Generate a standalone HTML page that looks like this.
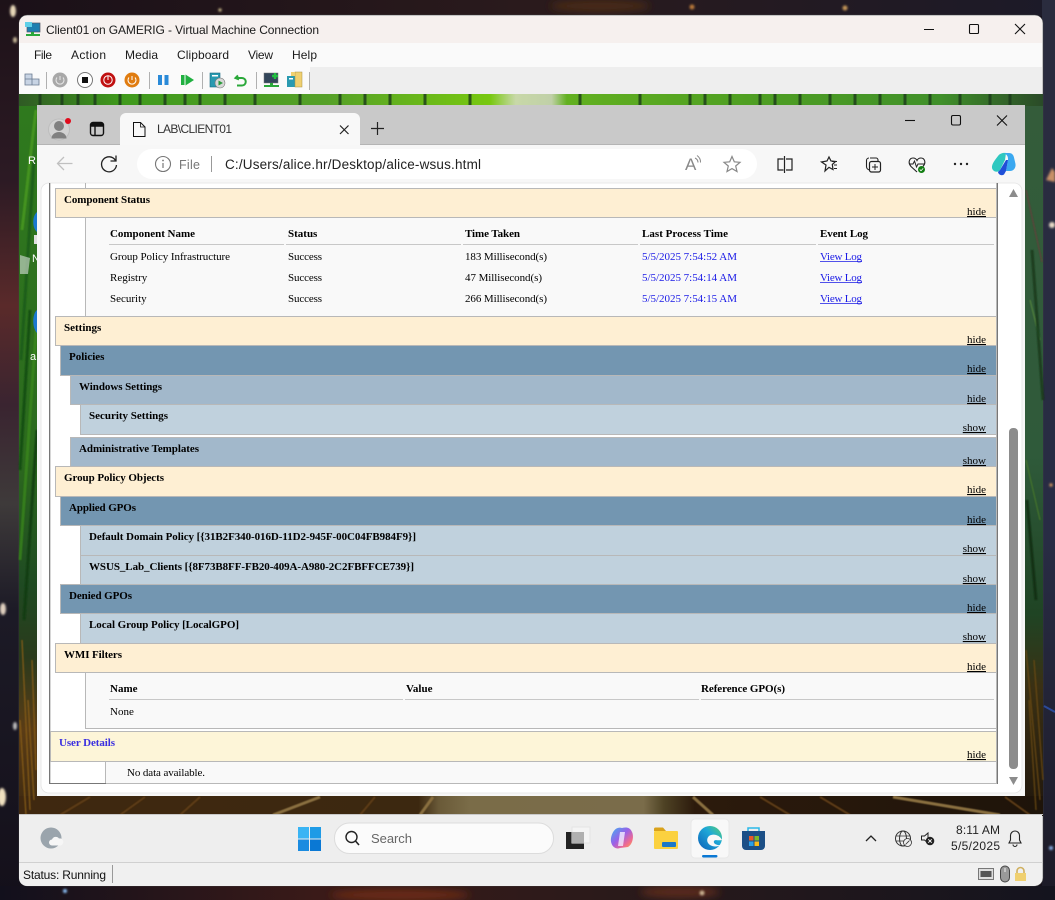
<!DOCTYPE html>
<html><head><meta charset="utf-8"><title>Client01</title>
<style>
html,body{margin:0;padding:0;width:1055px;height:900px;overflow:hidden;background:#15101a}
svg{display:block}
.u{font-family:"Liberation Sans",sans-serif;font-size:12px;fill:#1a1a1a}
.s{font-family:"Liberation Serif",serif;font-size:11px;fill:#000}
.b{font-family:"Liberation Serif",serif;font-size:11px;font-weight:bold;fill:#000}
.l{text-decoration:underline}
.a{fill:#1a1ae6}
</style></head><body>
<svg width="1055" height="900" viewBox="0 0 1055 900" xmlns="http://www.w3.org/2000/svg">
<defs>
<linearGradient id="gl" x1="0" y1="0" x2="0" y2="1"><stop offset="0" stop-color="#1d1218"/><stop offset=".2" stop-color="#2c1a24"/><stop offset=".34" stop-color="#5a2a2a"/><stop offset=".45" stop-color="#3a2430"/><stop offset=".56" stop-color="#3e3a3a"/><stop offset=".68" stop-color="#1c1a26"/><stop offset="1" stop-color="#14101a"/></linearGradient>
<linearGradient id="gr" x1="0" y1="0" x2="0" y2="1"><stop offset="0" stop-color="#2a2c3e"/><stop offset=".6" stop-color="#282c44"/><stop offset="1" stop-color="#1c1a26"/></linearGradient>
<linearGradient id="gt" x1="0" y1="0" x2="1" y2="0"><stop offset="0" stop-color="#1a1018"/><stop offset=".5" stop-color="#2a1a1c"/><stop offset="1" stop-color="#1c1a28"/></linearGradient>
<linearGradient id="gb" x1="0" y1="0" x2="1" y2="0"><stop offset="0" stop-color="#12101c"/><stop offset=".3" stop-color="#3a1a18"/><stop offset=".55" stop-color="#2c1a1a"/><stop offset="1" stop-color="#14141e"/></linearGradient>
<linearGradient id="dl" x1="0" y1="0" x2="0" y2="1"><stop offset="0" stop-color="#2f7a1e"/><stop offset=".5" stop-color="#2c6a1e"/><stop offset=".68" stop-color="#1f4a22"/><stop offset=".78" stop-color="#2a3a1c"/><stop offset=".88" stop-color="#5a3c16"/><stop offset="1" stop-color="#3c2810"/></linearGradient>
<linearGradient id="dr" x1="0" y1="0" x2="0" y2="1"><stop offset="0" stop-color="#345c3a"/><stop offset=".5" stop-color="#2f5a3a"/><stop offset=".72" stop-color="#1f4424"/><stop offset=".82" stop-color="#3a3014"/><stop offset="1" stop-color="#20160c"/></linearGradient>
<linearGradient id="dt" x1="0" y1="0" x2="1" y2="0"><stop offset="0" stop-color="#2f5a24"/><stop offset=".1" stop-color="#3f9a1c"/><stop offset=".3" stop-color="#55a028"/><stop offset=".46" stop-color="#78c810"/><stop offset=".485" stop-color="#c8d8a8"/><stop offset=".52" stop-color="#c0d0a8"/><stop offset=".535" stop-color="#62b020"/><stop offset=".7" stop-color="#50a022"/><stop offset=".9" stop-color="#40902a"/><stop offset="1" stop-color="#2a4a28"/></linearGradient>
<linearGradient id="db" x1="0" y1="0" x2="1" y2="0"><stop offset="0" stop-color="#3f2810"/><stop offset=".39" stop-color="#3c2810"/><stop offset=".41" stop-color="#6a5a38"/><stop offset=".44" stop-color="#7a6c48"/><stop offset=".61" stop-color="#7a6c4a"/><stop offset=".63" stop-color="#4e4224"/><stop offset=".66" stop-color="#2c1a0c"/><stop offset="1" stop-color="#1e140a"/></linearGradient>
<linearGradient id="edge" x1="1" y1="0" x2="0" y2="1"><stop offset="0" stop-color="#58d070"/><stop offset=".4" stop-color="#1ea8d8"/><stop offset="1" stop-color="#0b5fb8"/></linearGradient>
<linearGradient id="cop2" x1="0" y1="0" x2="1" y2="1"><stop offset="0" stop-color="#3fb0f0"/><stop offset=".45" stop-color="#9a60e8"/><stop offset=".75" stop-color="#f06a90"/><stop offset="1" stop-color="#f8b040"/></linearGradient>
<filter id="bl"><feGaussianBlur stdDeviation="1"/></filter>
<filter id="bl4"><feGaussianBlur stdDeviation="4"/></filter>
<filter id="bl2"><feGaussianBlur stdDeviation=".6"/></filter>
</defs>

<!-- space wallpaper -->
<rect x="0" y="0" width="1055" height="16" fill="url(#gt)"/>
<rect x="0" y="0" width="20" height="900" fill="url(#gl)"/>
<rect x="1042" y="0" width="13" height="900" fill="url(#gr)"/>
<rect x="0" y="886" width="1055" height="14" fill="url(#gb)"/>
<g filter="url(#bl4)">
<ellipse cx="400" cy="895" rx="70" ry="6" fill="#6a2a18"/><ellipse cx="680" cy="892" rx="40" ry="6" fill="#5a2a1c"/>
<ellipse cx="600" cy="6" rx="50" ry="6" fill="#4a2a18"/>
</g>
<g filter="url(#bl)">
<ellipse cx="13" cy="11" rx="3" ry="6" fill="#e8d8b8"/><ellipse cx="15" cy="40" rx="2" ry="3" fill="#c8b898"/>
<ellipse cx="2" cy="797" rx="4" ry="9" fill="#f0e0c0"/>
<ellipse cx="3" cy="609" rx="3" ry="6" fill="#e0d0c0"/><ellipse cx="15" cy="726" rx="2" ry="4" fill="#c0c0c0"/>
<path d="M1046 180L1052 168L1055 172V182Z" fill="#c89068"/><circle cx="1052" cy="225" r="3" fill="#e8dcc8"/><circle cx="1051" cy="485" r="1.600" fill="#e0a060"/>
<circle cx="702" cy="893" r="2.500" fill="#c8b090"/><circle cx="65" cy="891" r="2" fill="#8cc0f8"/><circle cx="1051" cy="848" r="2" fill="#8cb0e8"/>
<circle cx="220" cy="10" r="1.600" fill="#d0c090"/><circle cx="692" cy="7" r="2.500" fill="#b8783a"/><circle cx="845" cy="8" r="2.500" fill="#c89858"/>
</g>
<path d="M1044 706L1055 712" stroke="#2a4a9a" stroke-width="2"/>

<!-- VM window -->
<path d="M27 15H1035a8 8 0 0 1 8 8V878a8 8 0 0 1-8 8H27a8 8 0 0 1-8-8V23a8 8 0 0 1 8-8Z" fill="#eee" stroke="#444" stroke-width=".5"/>
<path d="M27 16H1035a7 7 0 0 1 7 7V43H19V23a8 8 0 0 1 8-7Z" fill="#f6f0ee"/>
<rect x="19" y="43" width="1023" height="24" fill="#fafafa"/>
<rect x="19" y="67" width="1023" height="27" fill="#eeeeee"/>
<rect x="19" y="67" width="291" height="27" fill="#fafafa"/>

<!-- VM desktop wallpaper -->
<rect x="19" y="94" width="18" height="722" fill="url(#dl)"/>
<rect x="1025" y="94" width="18" height="722" fill="url(#dr)"/>
<rect x="19" y="94" width="1024" height="12" fill="url(#dt)"/>
<rect x="19" y="796" width="1024" height="20" fill="url(#db)"/>
<g fill="none" filter="url(#bl2)">
<g stroke-width="3">
<path d="M22 230C28 180 32 140 36 110" stroke="#4a9a20" opacity=".8"/><path d="M21 360L34 160" stroke="#1d5a18" opacity=".8"/><path d="M20 470L30 310" stroke="#144a14" opacity=".8"/><path d="M20 560L36 330" stroke="#3a8a18" opacity=".7"/><path d="M24 620L37 430" stroke="#123c14" opacity=".8"/>
<path d="M1026 190L1042 262" stroke="#6a3a3a" stroke-width="1.500" opacity=".7"/><path d="M1030 300L1040 340" stroke="#5a8a3a" stroke-width="1.500" opacity=".7"/><path d="M1026 460L1040 520" stroke="#4a7a2a" stroke-width="1.500" opacity=".7"/><path d="M1032 250L1043 400" stroke="#153a1c" opacity=".8"/><path d="M1027 500L1036 600" stroke="#0f2c14" opacity=".8"/>
</g>
<path d="M1026 650L1040 800M1034 660L1043 780M1029 700L1036 810" stroke="#6a4a14" stroke-width="1.500" opacity=".8"/><path d="M22 640L30 810M28 700L34 800M20 720L26 815M32 660L36 770" stroke="#8a5e1c" stroke-width="1.500" opacity=".8"/>
<path d="M273 815L320 797M420 815L433 797M693 797L713 815M893 797L1000 815" stroke="#8a7040" stroke-width="3"/>
<path d="M60 815L90 797M120 815L145 797M180 815L200 797M360 815L375 797M760 797L790 815M820 797L850 815M1005 797L1030 815" stroke="#5e3c16" stroke-width="2"/>
</g>
<g stroke="#1c3a1c" stroke-width="3" opacity=".8"><path d="M40 94V106M62 94V106M78 94V106M95 94V106M120 94V106M140 94V106M165 94V106M185 94V106M200 94V106M225 94V106M255 94V106M300 94V106M340 94V106M365 94V106M390 94V106M425 94V106M470 94V106M580 94V106M640 94V106M690 94V106M705 94V106M730 94V106M760 94V106M775 94V106M800 94V106M830 94V106M855 94V106M880 94V106M905 94V106M930 94V106M960 94V106M990 94V106M1010 94V106"/></g>
<path d="M37 212C32 216 32 228 37 232Z" fill="#1a78d0"/><path d="M37 310C32 314 32 328 37 333Z" fill="#1a78d0"/>
<rect x="34" y="235" width="3" height="9" fill="#e0e0e0"/>
<path d="M20 255L30 258L28 274L20 274Z" fill="#c0d0c0" opacity=".7"/>
<text x="28" y="164" class="u" style="fill:#fff;font-size:11px">R</text>
<text x="32" y="262" class="u" style="fill:#fff;font-size:11px">N</text>
<text x="30" y="360" class="u" style="fill:#fff;font-size:11px">a</text>

<!-- title icon -->
<rect x="27" y="23" width="13" height="9" fill="#1e7fb0" stroke="#556" stroke-width=".7"/><rect x="25" y="22" width="7" height="5" fill="#5fd0e8"/><rect x="31" y="32" width="3" height="2" fill="#2aa83a"/><rect x="26" y="34" width="14" height="2" fill="#2aa83a"/>
<text x="46" y="34" class="u" textLength="273" lengthAdjust="spacing">Client01 on GAMERIG - Virtual Machine Connection</text>
<path d="M924 29.500H934" stroke="#111" stroke-width="1"/>
<rect x="969.500" y="24.500" width="9" height="9" rx="1" fill="none" stroke="#111" stroke-width="1.100"/>
<path d="M1015 24L1025 34M1025 24L1015 34" stroke="#111" stroke-width="1.100"/>

<!-- menu -->
<text x="34" y="59" class="u" textLength="18">File</text>
<text x="71" y="59" class="u" textLength="35">Action</text>
<text x="125" y="59" class="u" textLength="33">Media</text>
<text x="177" y="59" class="u" textLength="52">Clipboard</text>
<text x="248" y="59" class="u" textLength="25">View</text>
<text x="292" y="59" class="u" textLength="25">Help</text>

<!-- VM toolbar icons -->
<g>
<path d="M25 79h7v-5h-7ZM25 85h7v-6h-7ZM32 85h7v-6h-7Z" fill="#c8d4e4" stroke="#6a7a90" stroke-width=".8"/>
<path d="M46.500 72V89M149.500 72V89M202.500 72V89M256.500 72V89M309.500 72V90" stroke="#b0b0b0"/>
<circle cx="60" cy="80" r="7.500" fill="#a8a8a8"/><path d="M60 76V80M57 77.500a4 4 0 1 0 6 0" stroke="#e8e8e8" fill="none"/>
<circle cx="85" cy="80" r="7.500" fill="#fff" stroke="#777"/><rect x="82" y="77" width="6" height="6" fill="#111"/>
<circle cx="108" cy="80" r="7.500" fill="#c01010"/><circle cx="108" cy="80" r="4.200" fill="none" stroke="#fff"/><path d="M108 75.500V80" stroke="#fff"/>
<circle cx="132" cy="80" r="7.500" fill="#e07c10"/><path d="M132 76V80M129 77.500a4 4 0 1 0 6 0" stroke="#fff" fill="none"/>
<rect x="158" y="75" width="4" height="10" fill="#2a8ad8"/><rect x="164.500" y="75" width="4" height="10" fill="#2a8ad8"/>
<rect x="181" y="75" width="3.500" height="10" fill="#20b040"/><path d="M185.500 74.500L194 80L185.500 85.500Z" fill="#20b040"/>
<rect x="210" y="73" width="10" height="14" fill="#2a9ab0" stroke="#1a6a80" stroke-width=".6"/><rect x="212" y="75" width="6" height="1.500" fill="#fff"/><circle cx="220" cy="83" r="5" fill="#d8d8d8" stroke="#777" stroke-width=".6"/><path d="M218.500 80.500L223 83L218.500 85.500Z" fill="#2a9a3a"/>
<path d="M238 75.500L235.500 78L239 79.500M236 78H242a3.500 3.500 0 0 1 0 7.500H237" stroke="#2aa83a" stroke-width="2" fill="none"/>
<rect x="264" y="73" width="14" height="10" fill="#33465a" stroke="#777" stroke-width=".5"/><path d="M275 73V79M272 76H278" stroke="#22c040" stroke-width="2.400"/><rect x="270" y="83" width="3" height="2" fill="#2aa83a"/><rect x="264" y="85" width="15" height="2" fill="#2aa83a"/>
<rect x="287" y="76" width="8" height="11" fill="#2a9ab0"/><rect x="289" y="78" width="4" height="1.500" fill="#fff"/><rect x="295" y="72" width="7" height="15" fill="#f0d070" stroke="#a89040" stroke-width=".5"/><rect x="291" y="72" width="4" height="4" fill="#f0d070"/>
</g>

<!-- Browser window -->
<rect x="37" y="105" width="988" height="691" fill="#f7f7f7"/>
<rect x="37" y="105" width="988" height="39" fill="#c9c9c9"/>
<rect x="37" y="144" width="988" height="1" fill="#b4b4b4"/>
<circle cx="59" cy="129.500" r="10.500" fill="#d2d2d2" stroke="#bdbdbd"/>
<circle cx="59" cy="126" r="5" fill="#808080"/><path d="M51.500 138.500a7.500 6.500 0 0 1 15 0Z" fill="#808080"/>
<circle cx="68" cy="121" r="3" fill="#e00b1c"/>
<rect x="90.500" y="122.500" width="13" height="13" rx="2.500" fill="none" stroke="#111" stroke-width="1.400"/><path d="M90.500 126H103.500M95 126V135.500" stroke="#111" stroke-width="1.400"/><rect x="91" y="123" width="12" height="3" fill="#111"/>
<path d="M120 145V119a6 6 0 0 1 6-6H354a6 6 0 0 1 6 6V145Z" fill="#f8f8f8"/>
<path d="M133.500 122.500H140.500L145 127V136.500H133.500Z" fill="none" stroke="#111" stroke-width="1"/><path d="M140.500 122.500V127H145" fill="none" stroke="#111" stroke-width=".8"/>
<text x="157" y="133" class="u" textLength="75" style="fill:#333">LAB\CLIENT01</text>
<path d="M340 125.500L348.500 134M348.500 125.500L340 134" stroke="#222" stroke-width="1.200"/>
<path d="M377.500 122V135M371 128.500H384" stroke="#222" stroke-width="1.200"/>
<path d="M905 120.500H915" stroke="#111" stroke-width="1.100"/>
<rect x="951.500" y="115.500" width="9" height="9.500" rx="1.500" fill="none" stroke="#111" stroke-width="1.100"/>
<path d="M997 115.500L1007 125.500M1007 115.500L997 125.500" stroke="#111" stroke-width="1.100"/>

<!-- Browser toolbar -->
<path d="M72.500 163.500H58M64 157L57.500 163.500L64 170" fill="none" stroke="#c0c0c0" stroke-width="1.300"/>
<path d="M115.500 160.500A7.500 7.500 0 1 0 116.500 165M116 155.500V161H110.500" fill="none" stroke="#222" stroke-width="1.300"/>
<rect x="137" y="149" width="620" height="30" rx="15" fill="#fff"/>
<circle cx="163" cy="164" r="7.500" fill="none" stroke="#777" stroke-width="1.100"/><path d="M163 163V168" stroke="#777" stroke-width="1.200"/><circle cx="163" cy="160.500" r=".9" fill="#777"/>
<text x="179" y="169" class="u" textLength="21" style="fill:#777;font-size:12.500px">File</text>
<path d="M211.500 156V172" stroke="#999"/>
<text x="225" y="169" class="u" textLength="256" style="font-size:13.500px;fill:#222">C:/Users/alice.hr/Desktop/alice-wsus.html</text>
<text x="685" y="170" class="u" style="fill:#888;font-size:17px">A</text>
<path d="M695 158a5 5 0 0 1 3 4.500M697 155.500a8 8 0 0 1 3.500 7" fill="none" stroke="#888"/>
<path d="M732 156.500L734.300 161.800L740 162.300L735.700 166L737 171.500L732 168.600L727 171.500L728.300 166L724 162.300L729.700 161.800Z" fill="none" stroke="#888" stroke-width="1.200"/>
<path d="M783.500 159H778V170H783.500M786 159H792V170H786M784.500 156V173" fill="none" stroke="#222" stroke-width="1.200"/>
<path d="M829 157L831 161L835.500 161.500L832.300 164.500L833 169.500L829 167.300L825 171L826 165L821.500 162L827 161Z" fill="none" stroke="#222" stroke-width="1.200"/><path d="M832 161.500H837M834 165H837M834 168.500H837" stroke="#222"/>
<path d="M870 158H876a2 2 0 0 1 2 2V161" fill="none" stroke="#222" stroke-width="1.100"/><path d="M866.500 162V160.500a2.500 2.500 0 0 1 2.500-2.500M869.500 170a3.500 3.500 0 0 1-3-3.500V162" fill="none" stroke="#222" stroke-width="1.100"/><rect x="869.500" y="161.500" width="11" height="10.500" rx="2" fill="none" stroke="#222" stroke-width="1.200"/><path d="M875 164V170M872 167H878" stroke="#222"/>
<path d="M917 172L911 166.500C907.500 162.500 909.500 158 913 158C915 158 916.300 159 917 160.500C917.700 159 919 158 921 158C924.500 158 926.500 162.500 923 166.500" fill="none" stroke="#222" stroke-width="1.100"/><path d="M909.500 164H913L914.500 161L916.500 167L918 164H925" fill="none" stroke="#222"/><circle cx="921.500" cy="169.500" r="3.500" fill="#107c10"/><path d="M919.800 169.500L921 170.800L923.200 168.400" fill="none" stroke="#fff" stroke-width=".8"/>
<circle cx="955" cy="164" r="1.200" fill="#222"/><circle cx="961" cy="164" r="1.200" fill="#222"/><circle cx="967" cy="164" r="1.200" fill="#222"/>
<!-- copilot -->
<path d="M998 156C1000 153 1004 152.500 1006 153L1005 160L1000 170C998 173 993 172 992 168C991.500 164 995 160 998 156Z" fill="#2fc8c0"/>
<path d="M1004 153H1009C1012 153 1013.500 155 1014 157.500L1015.500 164C1016 168 1013.500 171 1010 171H1006L1008 160C1008.500 156 1006 154 1004 153Z" fill="#3aa8f0"/>
<path d="M1000 170L1006 160H1008L1006 171L1004 174.500C1002 176 998.500 175 998 172Z" fill="#1f4fd8"/>

<!-- content -->
<rect x="41" y="183" width="981" height="610" rx="8" fill="#fff" stroke="#e4e4e4" stroke-width=".8"/>

<!-- report frame -->
<rect x="49" y="183" width="1.300" height="601" fill="#777"/>
<rect x="996.500" y="183" width="1.500" height="601" fill="#777"/>
<rect x="85" y="183" width="1" height="5" fill="#b5b5b5"/>

<!-- rows -->
<g stroke="#b8b8b8" stroke-width="1">
<rect x="55.500" y="188.500" width="941" height="29" fill="#feefd3"/>
<rect x="85.500" y="217.500" width="911" height="99" fill="#f9f9f9"/>
<rect x="55.500" y="316.500" width="941" height="29" fill="#feefd3"/>
<rect x="60.500" y="345.500" width="936" height="30" fill="#7396b1"/>
<rect x="70.500" y="375.500" width="926" height="29" fill="#a2b8cb"/>
<rect x="80.500" y="404.500" width="916" height="30" fill="#c0d1dd"/>
<rect x="70.500" y="437.500" width="926" height="29" fill="#a2b8cb"/>
<rect x="55.500" y="466.500" width="941" height="30" fill="#feefd3"/>
<rect x="60.500" y="496.500" width="936" height="29" fill="#7396b1"/>
<rect x="80.500" y="525.500" width="916" height="30" fill="#c0d1dd"/>
<rect x="80.500" y="555.500" width="916" height="29" fill="#c0d1dd"/>
<rect x="60.500" y="584.500" width="936" height="29" fill="#7396b1"/>
<rect x="80.500" y="613.500" width="916" height="30" fill="#c0d1dd"/>
<rect x="55.500" y="643.500" width="941" height="29" fill="#feefd3"/>
<rect x="85.500" y="672.500" width="911" height="56" fill="#f9f9f9"/>
<rect x="50.500" y="731.500" width="946" height="30" fill="#fdf5d8"/>
<rect x="105.500" y="761.500" width="891" height="22" fill="#f9f9f9"/>
</g>
<path d="M50 783.500H106" stroke="#777"/>

<!-- header texts -->
<text x="64" y="203" class="b" textLength="86">Component Status</text>
<text x="64" y="331" class="b">Settings</text>
<text x="69" y="360" class="b">Policies</text>
<text x="79" y="390" class="b" textLength="83">Windows Settings</text>
<text x="89" y="419" class="b" textLength="79">Security Settings</text>
<text x="79" y="452" class="b" textLength="120">Administrative Templates</text>
<text x="64" y="481" class="b" textLength="100">Group Policy Objects</text>
<text x="69" y="511" class="b" textLength="67">Applied GPOs</text>
<text x="89" y="540" class="b" textLength="327">Default Domain Policy [{31B2F340-016D-11D2-945F-00C04FB984F9}]</text>
<text x="89" y="570" class="b" textLength="325">WSUS_Lab_Clients [{8F73B8FF-FB20-409A-A980-2C2FBFFCE739}]</text>
<text x="69" y="599" class="b" textLength="63">Denied GPOs</text>
<text x="89" y="628" class="b" textLength="150">Local Group Policy [LocalGPO]</text>
<text x="64" y="658" class="b" textLength="58">WMI Filters</text>
<text x="59" y="746" class="b" style="fill:#3a2ee0" textLength="56">User Details</text>

<!-- hide / show -->
<g text-anchor="end">
<text x="986" y="215" class="s l">hide</text>
<text x="986" y="343" class="s l">hide</text>
<text x="986" y="372" class="s l">hide</text>
<text x="986" y="402" class="s l">hide</text>
<text x="986" y="431" class="s l">show</text>
<text x="986" y="464" class="s l">show</text>
<text x="986" y="493" class="s l">hide</text>
<text x="986" y="523" class="s l">hide</text>
<text x="986" y="552" class="s l">show</text>
<text x="986" y="582" class="s l">show</text>
<text x="986" y="611" class="s l">hide</text>
<text x="986" y="640" class="s l">show</text>
<text x="986" y="670" class="s l">hide</text>
<text x="986" y="758" class="s l">hide</text>
</g>

<!-- component table -->
<text x="110" y="237" class="b" textLength="85">Component Name</text>
<text x="288" y="237" class="b">Status</text>
<text x="465" y="237" class="b" textLength="55">Time Taken</text>
<text x="642" y="237" class="b" textLength="86">Last Process Time</text>
<text x="820" y="237" class="b" textLength="48">Event Log</text>
<path d="M109 244.500H284M286 244.500H461M463 244.500H638M640 244.500H816M818 244.500H994" stroke="#c8c8c8"/>
<text x="110" y="260" class="s" textLength="120">Group Policy Infrastructure</text><text x="288" y="260" class="s" textLength="34">Success</text><text x="465" y="260" class="s" textLength="82">183 Millisecond(s)</text><text x="642" y="260" class="s a" textLength="95">5/5/2025 7:54:52 AM</text><text x="820" y="260" class="s a" textLength="42">View Log</text>
<text x="110" y="281" class="s">Registry</text><text x="288" y="281" class="s" textLength="34">Success</text><text x="465" y="281" class="s" textLength="77">47 Millisecond(s)</text><text x="642" y="281" class="s a" textLength="95">5/5/2025 7:54:14 AM</text><text x="820" y="281" class="s a" textLength="42">View Log</text>
<text x="110" y="302" class="s">Security</text><text x="288" y="302" class="s" textLength="34">Success</text><text x="465" y="302" class="s" textLength="82">266 Millisecond(s)</text><text x="642" y="302" class="s a" textLength="95">5/5/2025 7:54:15 AM</text><text x="820" y="302" class="s a" textLength="42">View Log</text>
<path d="M820 261.500H862M820 282.500H862M820 303.500H862" stroke="#1a1ae6" stroke-width=".8"/>

<!-- wmi table -->
<text x="110" y="692" class="b">Name</text><text x="406" y="692" class="b">Value</text><text x="701" y="692" class="b" textLength="84">Reference GPO(s)</text>
<path d="M109 699.500H403M405 699.500H699M701 699.500H994" stroke="#c8c8c8"/>
<text x="110" y="715" class="s">None</text>
<text x="127" y="776" class="s" textLength="78">No data available.</text>

<!-- scrollbar -->
<path d="M1013.500 189L1018 197H1009Z" fill="#8c8c8c"/>
<path d="M1013.500 785L1018 777H1009Z" fill="#8c8c8c"/>
<rect x="1009" y="428" width="9" height="341" rx="4" fill="#8c8c8c"/>

<!-- Taskbar -->
<rect x="19" y="815" width="1023" height="47" fill="#eeeeee"/>
<rect x="19" y="814" width="1024" height="1" fill="#c8c8c8"/>
<rect x="19" y="862" width="1023" height="1" fill="#d0d0d0"/>
<circle cx="51" cy="838" r="10.500" fill="#9aa4ac"/><path d="M52 845.500a3 3 0 0 1 0-6a4 4 0 0 1 7-1a3.500 3.500 0 0 1 1.500 7Z" fill="#f6f6f6"/>
<rect x="298" y="827" width="11" height="11.500" fill="#39b4f4"/><rect x="310" y="827" width="11" height="11.500" fill="#1f9be6"/><rect x="298" y="839.500" width="11" height="11.500" fill="#1a8be0"/><rect x="310" y="839.500" width="11" height="11.500" fill="#0a78d4"/>
<rect x="334.500" y="823" width="219" height="30.500" rx="15" fill="#fbfbfb" stroke="#dcdcdc"/>
<circle cx="351.500" cy="837" r="5.500" fill="none" stroke="#222" stroke-width="1.400"/><path d="M355.500 841L359 845" stroke="#222" stroke-width="1.600"/>
<text x="371" y="843" class="u" textLength="41" style="fill:#666;font-size:13px">Search</text>
<rect x="566" y="832" width="18" height="17" fill="#222"/><rect x="572" y="827" width="18" height="16" fill="#f4f4f4" stroke="#e4e4e4"/><rect x="572" y="832" width="12" height="11" fill="#b0b0b0"/>
<path d="M622 828C616 826 612 832 611 838C610 845 615 850 620 848L628 847C633 844 634 836 632 832C630 827 626 827 622 828Z" fill="url(#cop2)"/><path d="M620 832L625 832L623 846L618 846Z" fill="#f4eeff" opacity=".8"/>
<path d="M654 829a1.500 1.500 0 0 1 1.500-1.500H663L666 831H654Z" fill="#d9a21b"/><rect x="654" y="831" width="24" height="18" rx="1" fill="#fbd13f"/><rect x="662" y="842" width="14" height="5" rx="1" fill="#1c78c8"/>
<rect x="691" y="819" width="38" height="39" rx="4" fill="#f8f8f8" stroke="#e8e8e8"/>
<circle cx="710" cy="838" r="12" fill="url(#edge)"/><path d="M722 840C720 835 713 833 709 836C706 839 707 843 710 845C713 847 718 847 720 845C716 845.500 713 843 714 841C715 839 718 841 722 840Z" fill="#f8f8f8"/>
<rect x="702" y="855" width="15.500" height="2.500" rx="1.200" fill="#0a78d4"/>
<path d="M742 831H765V846a4 4 0 0 1-4 4H746a4 4 0 0 1-4-4Z" fill="#1c4f86"/><path d="M748 831V828H759V831" fill="none" stroke="#2ab8e8" stroke-width="1.500"/>
<rect x="749" y="836" width="4.500" height="4.500" fill="#e85a28"/><rect x="754.500" y="836" width="4.500" height="4.500" fill="#7cba2a"/><rect x="749" y="841.500" width="4.500" height="4.500" fill="#2aa0e8"/><rect x="754.500" y="841.500" width="4.500" height="4.500" fill="#fbbc18"/>
<path d="M866 841L871 836L876 841" fill="none" stroke="#222" stroke-width="1.300"/>
<circle cx="903" cy="838.500" r="7.500" fill="none" stroke="#333"/><ellipse cx="903" cy="838.500" rx="3.500" ry="7.500" fill="none" stroke="#333"/><path d="M895.500 836H910.500M895.500 841H910.500" stroke="#333" stroke-width=".8"/><circle cx="907.500" cy="842.500" r="4" fill="#eee" stroke="#333" stroke-width=".8"/><path d="M905.500 844.500L909.500 840.500" stroke="#333" stroke-width=".8"/>
<path d="M921.500 836H924.500L928 833V843L924.500 840H921.500Z" fill="none" stroke="#222"/><circle cx="930" cy="841" r="4.300" fill="#222"/><path d="M928.300 839.300L931.700 842.700M931.700 839.300L928.300 842.700" stroke="#fff" stroke-width=".9"/>
<text x="956" y="834" class="u" textLength="44" style="fill:#222">8:11 AM</text>
<text x="951" y="850" class="u" textLength="49" style="fill:#222">5/5/2025</text>
<path d="M1015 831a4.500 4.500 0 0 0-4.500 4.500V840L1009 843H1021L1019.500 840V835.500A4.500 4.500 0 0 0 1015 831ZM1013 844.500a2 2 0 0 0 4 0" fill="none" stroke="#222" stroke-width="1.100"/>

<!-- Status bar -->
<path d="M19 863H1042V878a8 8 0 0 1-8 8H27a8 8 0 0 1-8-8Z" fill="#f0f0f0"/>
<text x="23" y="879" class="u" textLength="83" style="fill:#111">Status: Running</text>
<path d="M112.500 865V883" stroke="#999"/>
<rect x="978.500" y="868.500" width="15" height="11" fill="#ddd" stroke="#777"/><rect x="980.500" y="871" width="11" height="6" fill="#555"/>
<rect x="1000.500" y="866" width="9" height="16" rx="4.500" fill="#999" stroke="#444"/><path d="M1005 868V872" stroke="#eee"/>
<rect x="1015" y="873" width="11" height="8" fill="#f0d070"/><path d="M1017 873V871a3.500 3.500 0 0 1 7 0V873" fill="none" stroke="#d0b060" stroke-width="1.600"/>
</svg>
</body></html>
